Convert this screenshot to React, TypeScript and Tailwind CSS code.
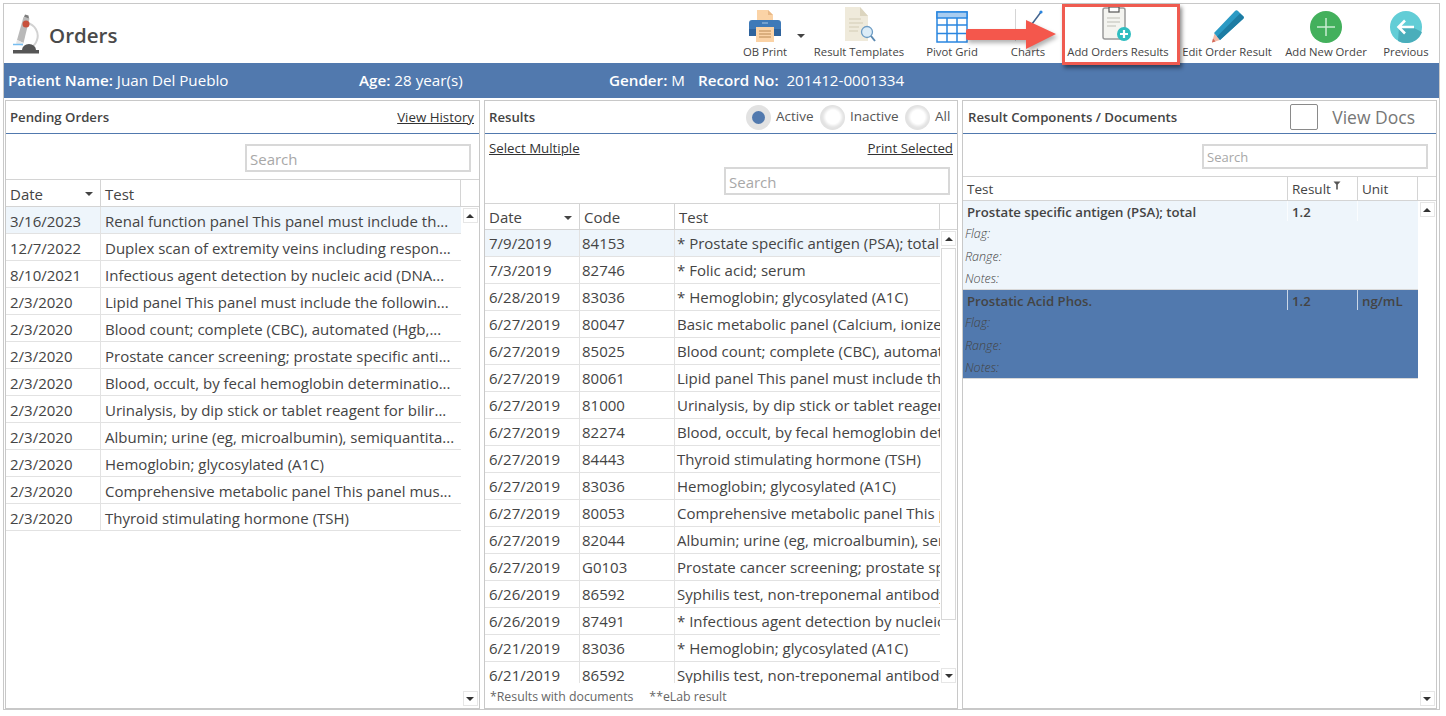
import React from 'react';

const pending = [
  ['3/16/2023', 'Renal function panel This panel must include th...'],
  ['12/7/2022', 'Duplex scan of extremity veins including respon...'],
  ['8/10/2021', 'Infectious agent detection by nucleic acid (DNA...'],
  ['2/3/2020', 'Lipid panel This panel must include the followin...'],
  ['2/3/2020', 'Blood count; complete (CBC), automated (Hgb,...'],
  ['2/3/2020', 'Prostate cancer screening; prostate specific anti...'],
  ['2/3/2020', 'Blood, occult, by fecal hemoglobin determinatio...'],
  ['2/3/2020', 'Urinalysis, by dip stick or tablet reagent for bilir...'],
  ['2/3/2020', 'Albumin; urine (eg, microalbumin), semiquantita...'],
  ['2/3/2020', 'Hemoglobin; glycosylated (A1C)'],
  ['2/3/2020', 'Comprehensive metabolic panel This panel mus...'],
  ['2/3/2020', 'Thyroid stimulating hormone (TSH)'],
];

const results = [
  ['7/9/2019', '84153', '* Prostate specific antigen (PSA); total'],
  ['7/3/2019', '82746', '* Folic acid; serum'],
  ['6/28/2019', '83036', '* Hemoglobin; glycosylated (A1C)'],
  ['6/27/2019', '80047', 'Basic metabolic panel (Calcium, ionized)'],
  ['6/27/2019', '85025', 'Blood count; complete (CBC), automated'],
  ['6/27/2019', '80061', 'Lipid panel This panel must include the'],
  ['6/27/2019', '81000', 'Urinalysis, by dip stick or tablet reagent'],
  ['6/27/2019', '82274', 'Blood, occult, by fecal hemoglobin deter'],
  ['6/27/2019', '84443', 'Thyroid stimulating hormone (TSH)'],
  ['6/27/2019', '83036', 'Hemoglobin; glycosylated (A1C)'],
  ['6/27/2019', '80053', 'Comprehensive metabolic panel This pa'],
  ['6/27/2019', '82044', 'Albumin; urine (eg, microalbumin), semi'],
  ['6/27/2019', 'G0103', 'Prostate cancer screening; prostate spec'],
  ['6/26/2019', '86592', 'Syphilis test, non-treponemal antibody'],
  ['6/26/2019', '87491', '* Infectious agent detection by nucleic'],
  ['6/21/2019', '83036', '* Hemoglobin; glycosylated (A1C)'],
  ['6/21/2019', '86592', 'Syphilis test, non-treponemal antibody'],
];

function PrinterIcon() {
  return (
    <svg width="34" height="34" viewBox="0 0 34 34">
      <path d="M9 1h11l5 5v9H9z" fill="#fbd3a6" />
      <path d="M20 1l5 5h-5z" fill="#e9b987" />
      <path d="M4 11h26a3 3 0 0 1 3 3v13H1V14a3 3 0 0 1 3-3z" fill="#3f7ab8" />
      <rect x="1" y="20" width="32" height="7" fill="#2f639c" />
      <rect x="8" y="18" width="18" height="15" fill="#fbd3a6" />
      <path d="M11 22h12M11 25h12M11 28h12" stroke="#b98a55" strokeWidth="1" />
      <path d="M14 14h6" stroke="#a9c8e6" strokeWidth="1" />
    </svg>
  );
}

function TemplateIcon() {
  return (
    <svg width="36" height="36" viewBox="0 0 36 36">
      <path d="M4 0h15l8 9v25H4z" fill="#efeadb" />
      <path d="M19 0l8 9h-8z" fill="#dcd5bf" />
      <path d="M8 12h12M8 16h14M8 20h10M8 24h9" stroke="#d3ccb6" strokeWidth="1.2" />
      <circle cx="26" cy="25" r="5.5" fill="#dcecf7" stroke="#6d9cc4" strokeWidth="1.3" />
      <path d="M30 29l4 5" stroke="#5a88b0" strokeWidth="2" />
    </svg>
  );
}

function GridIcon() {
  return (
    <svg width="32" height="32" viewBox="0 0 32 32">
      <rect x="1" y="1" width="30" height="30" fill="#fff" stroke="#2a86e0" strokeWidth="1.5" />
      <rect x="1" y="1" width="30" height="6" fill="#a9cdf0" stroke="#2a86e0" strokeWidth="1.5" />
      <path d="M1 14h30M1 22.500h30M11 7v24M21 7v24" stroke="#2a86e0" strokeWidth="1.5" />
    </svg>
  );
}

function ChartIcon() {
  return (
    <svg width="32" height="34" viewBox="0 0 32 34">
      <path d="M3.500 0v32" stroke="#d5d5d5" strokeWidth="1" />
      <path d="M12 28l8-13 9-12" stroke="#44658f" strokeWidth="1.500" fill="none" />
      <circle cx="29" cy="3" r="1.600" fill="#2a86e0" />
    </svg>
  );
}

function ClipboardPlusIcon() {
  return (
    <svg width="32" height="36" viewBox="0 0 32 36">
      <rect x="1" y="1" width="22" height="31" rx="2" fill="#f4f4f0" stroke="#9a9a9a" strokeWidth="1.500" />
      <rect x="7" y="0" width="10" height="5" fill="#fff" stroke="#555" strokeWidth="1.200" />
      <path d="M5 11h13M5 15h13M5 19h9" stroke="#bdbdb5" strokeWidth="1.200" />
      <circle cx="22" cy="27" r="7" fill="#2fbdc0" />
      <path d="M22 23v8M18 27h8" stroke="#fff" strokeWidth="2.200" />
    </svg>
  );
}

function PencilIcon() {
  return (
    <svg width="34" height="34" viewBox="0 0 34 34">
      <path d="M10 31l-8 2.500 2.500-9z" fill="#f4bba8" />
      <path d="M4 24L25 2a2 2 0 0 1 3 0l5 5a2 2 0 0 1 0 3L10 31z" fill="#2b9ac4" />
      <path d="M7 27.500L30 4.500l3 2.500a2 2 0 0 1 0 3L10 31z" fill="#1d7ca3" />
      <path d="M3 29.500l-1 4 3.500-1z" fill="#d46a5b" />
    </svg>
  );
}

function CircleIcon({ kind }: { kind: 'plus' | 'back' }) {
  if (kind === 'plus') {
    return (
      <svg width="32" height="32" viewBox="0 0 32 32">
        <circle cx="16" cy="16" r="16" fill="#43b05c" />
        <path d="M16 7v18M7 16h18" stroke="#c9ecd1" strokeWidth="1.500" />
      </svg>
    );
  }
  return (
    <svg width="32" height="32" viewBox="0 0 32 32">
      <circle cx="16" cy="16" r="16" fill="#62cdd6" />
      <path d="M9 16l13 0 10 5a16 16 0 0 1-16 11 16 16 0 0 1-8-2z" fill="#4aaebb" />
      <path d="M24 16H9M15 9.500L8.500 16l6.500 6.500" stroke="#fff" strokeWidth="2.600" fill="none" />
    </svg>
  );
}

function Microscope() {
  return (
    <svg width="28" height="41" viewBox="0 0 28 41" className="shrink-0">
      <path d="M15 9a13 13 0 0 1 10 17 13 13 0 0 1-7 8" fill="none" stroke="#d2d2d2" strokeWidth="2" />
      <path d="M5 26L11.500 3l6 1.500L11.500 29z" fill="#b9b9b9" />
      <path d="M12 3l1-2.500 3.500 1L17 4.500z" fill="#7d7d7d" />
      <path d="M5 26l6.500 3-1 3-6.500-2.500z" fill="#e7e7e7" />
      <circle cx="14" cy="10" r="3.500" fill="#c8513c" />
      <path d="M1 30.500h10" stroke="#76bdf0" strokeWidth="1.500" />
      <path d="M10 36a7 6 0 0 1 14 0z" fill="#565656" />
      <rect x="1" y="36" width="26" height="3.500" fill="#565656" />
    </svg>
  );
}

function ToolButton({ width, margin, label, icon }: { width: string; margin: string; label: string; icon: React.ReactNode }) {
  return (
    <div className={`${width} ${margin} flex flex-col items-center shrink-0`}>
      <div className="h-[38px] flex items-end justify-center">{icon}</div>
      <span className="text-[11.300px] leading-[16px] mt-[1px] whitespace-nowrap text-[#444]">{label}</span>
    </div>
  );
}

function ScrollButton({ up }: { up?: boolean }) {
  return (
    <div className="w-[15px] h-[15px] border border-[#e6e6e6] bg-white flex items-center justify-center shrink-0">
      <div className={up ? 'w-0 h-0 border-x-[4px] border-x-transparent border-b-[4px] border-b-[#333]' : 'w-0 h-0 border-x-[4px] border-x-transparent border-t-[4px] border-t-[#333]'} />
    </div>
  );
}

function SearchBox({ height = 'h-[28px]', text = 'text-[15px]' }: { height?: string; text?: string }) {
  return (
    <div className={`w-[226px] ${height} border-2 border-[#d8d8d8] px-[3px] pt-[2px] flex items-center ${text} text-[#a8a8a8]`}>Search</div>
  );
}

function HeaderCell({ className, size = 'text-[15px]', children }: { className: string; size?: string; children: React.ReactNode }) {
  return <div className={`${className} ${size} h-full border-r border-[#d4d4d4] px-[4px] pt-[2px] flex items-center text-[#444] shrink-0`}>{children}</div>;
}

function SortCaret() {
  return <div className="ml-auto mr-[3px] w-0 h-0 border-x-[4px] border-x-transparent border-t-[4px] border-t-[#444]" />;
}

function Radio({ label, on, width }: { label: string; on?: boolean; width: string }) {
  return (
    <div className={`${width} flex items-center shrink-0`}>
      <div className="w-[25px] h-[25px] rounded-full bg-[#e2e2e2] flex items-center justify-center">
        <div className={on ? 'w-[13px] h-[13px] rounded-full bg-[#5179ae]' : 'w-[14px] h-[14px] rounded-full bg-white shadow-[0_0_3px_2px_#ffffff]'} />
      </div>
      <span className="ml-[5px] pb-[2px] text-[13.500px] text-[#555]">{label}</span>
    </div>
  );
}

function ComponentGroup({ name, result, unit, selected }: { name: string; result: string; unit: string; selected?: boolean }) {
  const bg = selected ? 'bg-[#5179ae]' : 'bg-[#eef5fb]';
  return (
    <div className={`${bg} h-[89px] border-b border-[#d8d8d8] text-[#444]`}>
      <div className="h-[20px] flex font-semibold text-[13.200px] leading-[22px]">
        <div className="w-[325px] pl-[4px] border-r border-white/70 whitespace-nowrap">{name}</div>
        <div className="w-[70px] pl-[4px] border-r border-white/70">{result}</div>
        <div className="pl-[4px]">{unit}</div>
      </div>
      <div className="pl-[2px] italic font-light text-[12.500px] leading-[22.500px] pt-[2px]">
        <div>Flag:</div>
        <div>Range:</div>
        <div>Notes:</div>
      </div>
    </div>
  );
}

export default function App() {
  return (
    <div className="w-[1446px] h-[716px] bg-white pt-[3px] pl-[3px] pr-[6px] pb-[6px] font-['Open_Sans',sans-serif] text-[#444] overflow-hidden">
      <div className="relative h-full border border-[#c8c8c8] flex flex-col">
        {/* toolbar */}
        <div className="h-[59px] flex items-start shrink-0">
          <div className="pl-[8px] pt-[10px] flex items-center">
            <Microscope />
            <span className="ml-[9px] pt-[2px] text-[20.500px] font-semibold text-[#4a4a4a]">Orders</span>
          </div>
          <div className="ml-auto flex items-start pt-[1px] pr-[7px]">
            <div className="relative">
              <ToolButton width="w-[60px]" margin="" label="OB Print" icon={<PrinterIcon />} />
              <div className="absolute left-[62px] top-[29px] w-0 h-0 border-x-[4px] border-x-transparent border-t-[4px] border-t-[#444]" />
            </div>
            <ToolButton width="w-[96px]" margin="ml-[16px]" label="Result Templates" icon={<TemplateIcon />} />
            <ToolButton width="w-[64px]" margin="ml-[13px]" label="Pivot Grid" icon={<GridIcon />} />
            <ToolButton width="w-[44px]" margin="ml-[22px]" label="Charts" icon={<ChartIcon />} />
            <ToolButton width="w-[108px]" margin="ml-[14px]" label="Add Orders Results" icon={<ClipboardPlusIcon />} />
            <ToolButton width="w-[90px]" margin="ml-[10px]" label="Edit Order Result" icon={<PencilIcon />} />
            <ToolButton width="w-[108px]" margin="" label="Add New Order" icon={<CircleIcon kind="plus" />} />
            <ToolButton width="w-[52px]" margin="" label="Previous" icon={<CircleIcon kind="back" />} />
          </div>
        </div>

        {/* patient bar */}
        <div className="h-[35px] bg-[#5179ae] text-white text-[15.200px] flex items-center pl-[4px] shrink-0 whitespace-nowrap">
          <div className="w-[351px]"><b className="font-semibold">Patient Name:</b> Juan Del Pueblo</div>
          <div className="w-[250px]"><b className="font-semibold">Age:</b> 28 year(s)</div>
          <div className="w-[89px]"><b className="font-semibold">Gender:</b> M</div>
          <div><b className="font-semibold">Record No:</b>&nbsp; 201412-0001334</div>
        </div>

        {/* panels */}
        <div className="flex-1 min-h-0 flex gap-[4px] pt-[2px] pl-[1px]">
          {/* pending orders */}
          <div className="w-[475px] border border-[#c8c8c8] flex flex-col min-h-0">
            <div className="h-[33px] shrink-0 border-b border-[#5179ae] px-[4px] pt-[1px] flex items-center justify-between">
              <span className="text-[13.200px] font-semibold">Pending Orders</span>
              <span className="text-[13.300px] underline text-[#333] mr-[1px]">View History</span>
            </div>
            <div className="h-[45px] shrink-0 flex justify-end pt-[10px] pr-[8px]"><SearchBox /></div>
            <div className="h-[28px] shrink-0 flex border-y border-[#d4d4d4]">
              <HeaderCell className="w-[95px]">Date<SortCaret /></HeaderCell>
              <HeaderCell className="w-[360px]">Test</HeaderCell>
            </div>
            <div className="flex-1 min-h-0 flex">
              <div className="w-[455px] shrink-0">
                {pending.map((row, i) => (
                  <div key={i} className={`h-[27px] flex items-center border-b border-[#e2e2e2] text-[15px] whitespace-nowrap ${i === 0 ? 'bg-[#eef5fb]' : ''}`}>
                    <div className="w-[95px] h-full flex items-center pl-[4px] pt-[3px] border-r border-[#e2e2e2] shrink-0">{row[0]}</div>
                    <div className="pl-[4px] pt-[3px] overflow-hidden">{row[1]}</div>
                  </div>
                ))}
              </div>
              <div className="flex-1 flex flex-col justify-between items-center pt-[1px] pb-[2px]">
                <ScrollButton up />
                <ScrollButton />
              </div>
            </div>
          </div>

          {/* results */}
          <div className="w-[474px] border border-[#c8c8c8] flex flex-col min-h-0">
            <div className="h-[33px] shrink-0 border-b border-[#5179ae] pl-[4px] flex items-center">
              <span className="pt-[1px] text-[13.200px] font-semibold">Results</span>
              <div className="ml-auto flex items-center">
                <Radio label="Active" on width="w-[74px]" />
                <Radio label="Inactive" width="w-[85px]" />
                <Radio label="All" width="w-[52px]" />
              </div>
            </div>
            <div className="h-[69px] shrink-0 flex flex-col">
              <div className="flex justify-between px-[4px] pt-[5px] text-[13.300px] underline text-[#333]">
                <span>Select Multiple</span>
                <span>Print Selected</span>
              </div>
              <div className="flex justify-end pr-[7px] mt-[8px]"><SearchBox /></div>
            </div>
            <div className="h-[27px] shrink-0 flex border-y border-[#d4d4d4]">
              <HeaderCell className="w-[95px]">Date<SortCaret /></HeaderCell>
              <HeaderCell className="w-[95px]">Code</HeaderCell>
              <HeaderCell className="w-[265px]">Test</HeaderCell>
            </div>
            <div className="flex-1 min-h-0 flex relative">
              <div className="w-[455px] shrink-0 h-[453px] overflow-hidden">
                {results.map((row, i) => (
                  <div key={i} className={`h-[27px] flex items-center border-b border-[#e2e2e2] text-[15px] whitespace-nowrap ${i === 0 ? 'bg-[#eef5fb]' : ''}`}>
                    <div className="w-[95px] h-full flex items-center pl-[4px] border-r border-[#e2e2e2] shrink-0">{row[0]}</div>
                    <div className="w-[95px] h-full flex items-center pl-[2px] border-r border-[#e2e2e2] shrink-0">{row[1]}</div>
                    <div className="pl-[2px] overflow-hidden">{row[2]}</div>
                  </div>
                ))}
              </div>
              <div className="w-[17px] h-[453px] flex flex-col items-center pt-[1px]">
                <ScrollButton up />
                <div className="w-[15px] h-[372px] mt-[2px] border border-[#d8d8d8]" />
                <div className="mt-auto"><ScrollButton /></div>
              </div>
              <div className="absolute left-[5px] bottom-[2px] text-[12.300px] text-[#666] whitespace-pre">*Results with documents     **eLab result</div>
            </div>
          </div>

          {/* result components */}
          <div className="w-[475px] border border-[#c8c8c8] flex flex-col min-h-0">
            <div className="h-[33px] shrink-0 border-b border-[#5179ae] pl-[5px] flex items-center">
              <span className="pt-[1px] text-[13.200px] font-semibold">Result Components / Documents</span>
              <div className="ml-auto w-[28px] h-[26px] border border-[#8a8a8a] rounded-[2px]" />
              <span className="ml-[14px] mr-[21px] text-[17.500px] text-[#777]">View Docs</span>
            </div>
            <div className="h-[42px] shrink-0 flex justify-end pt-[10px] pr-[8px]"><SearchBox height="h-[25px]" text="text-[13px]" /></div>
            <div className="h-[25px] shrink-0 flex border-y border-[#d4d4d4]">
              <HeaderCell className="w-[325px]" size="text-[13.500px]">Test</HeaderCell>
              <HeaderCell className="w-[70px]" size="text-[13.500px]">
                <span>Result</span>
                <svg width="8" height="9" viewBox="0 0 8 9" className="ml-[2px] -mt-[9px]"><path d="M0.500 0.500h7L4.800 3.500V8.500H3.200V3.500z" fill="#555" /></svg>
              </HeaderCell>
              <HeaderCell className="w-[60px]" size="text-[13.500px]">Unit</HeaderCell>
            </div>
            <div className="flex-1 min-h-0 flex">
              <div className="w-[455px] shrink-0">
                <ComponentGroup name="Prostate specific antigen (PSA); total" result="1.2" unit="" />
                <ComponentGroup name="Prostatic Acid Phos." result="1.2" unit="ng/mL" selected />
              </div>
              <div className="flex-1 flex flex-col justify-between items-center pt-[1px] pb-[2px]">
                <ScrollButton up />
                <ScrollButton />
              </div>
            </div>
          </div>
        </div>

        {/* callout over the toolbar */}
        <div className="absolute left-[1058px] top-[0px] w-[118px] h-[61px] border-[3px] border-[#ef5b50] shadow-[2px_3px_4px_rgba(0,0,0,0.45)]" />
        <svg width="92" height="32" viewBox="0 0 92 32" className="absolute left-[962px] top-[15px] drop-shadow-[2px_3px_2px_rgba(0,0,0,0.3)]">
          <path d="M2 10h58V1l30 14-30 15v-9H2a2 2 0 0 1-2-2v-7a2 2 0 0 1 2-2z" fill="#f4574c" />
        </svg>
      </div>
    </div>
  );
}
